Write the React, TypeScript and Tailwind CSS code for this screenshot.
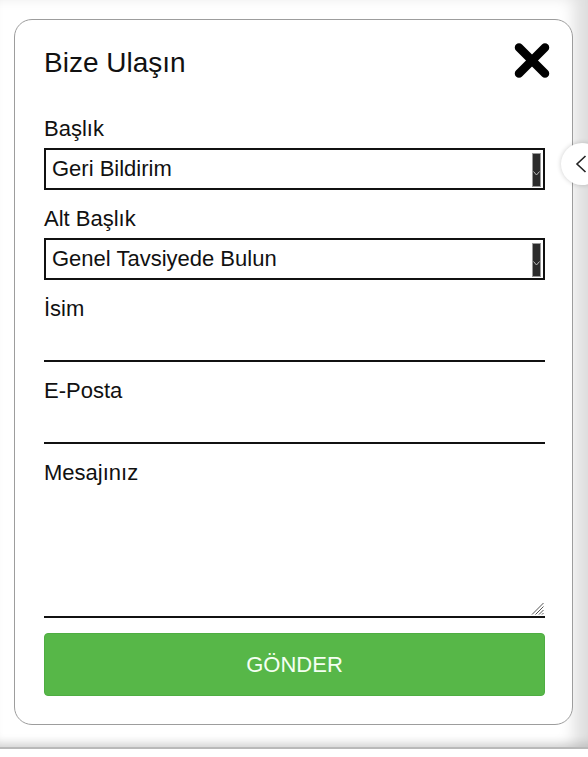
import { useState } from 'react';

const font = { fontFamily: '"Liberation Sans", Arial, sans-serif' };

function SelectBox({ value, options }: { value: string; options: string[] }) {
  const [v, setV] = useState(value);
  return (
    <div className="relative mt-[6px] h-[42px] border-2 border-[#111] bg-white">
      <select
        value={v}
        onChange={e => setV(e.target.value)}
        className="h-full w-full appearance-none bg-transparent pl-[6px] pr-[20px] text-[22px] leading-[26px] text-[#111] outline-none"
      >
        {options.map(o => (
          <option key={o}>{o}</option>
        ))}
      </select>
      {/* native-looking scroll arrow */}
      <div className="pointer-events-none absolute right-[2px] top-[3px] flex h-[34px] w-[9px] flex-col items-center justify-center border border-[#9a9a9a] bg-[#2c2c2c]">
        <svg width="7" height="5" viewBox="0 0 7 5" className="mt-[6px]">
          <path d="M0.5 0.5 L3.5 4 L6.5 0.5" fill="none" stroke="#bbb" strokeWidth="1" />
        </svg>
      </div>
    </div>
  );
}

export default function App() {
  return (
    <div className="h-[757px] w-[588px] overflow-hidden bg-white" style={font}>
      <div className="relative h-[749px] border-b-2 border-[#b9b9b9] bg-white shadow-[inset_0_-10px_10px_-6px_rgba(0,0,0,0.14),inset_-18px_0_16px_-4px_rgba(0,0,0,0.13)] pt-[19px]">
        {/* Card */}
        <div className="ml-[14px] w-[559px] rounded-[18px] border border-[#9d9d9d] bg-white pb-[28px] pl-[29px] pr-[27px] pt-[27px]">
          <div className="flex h-8 items-start justify-between">
            <h2 className="text-[28px] leading-[32px] text-[#111]">Bize Ulaşın</h2>
            <button className="-mr-[6px] -mt-[5px]" aria-label="Kapat">
              <svg width="38" height="37" viewBox="0 0 38 37">
                <path d="M6 5.5 L32 31.5 M32 5.5 L6 31.5" stroke="#000" strokeWidth="8.5" strokeLinecap="round" />
              </svg>
            </button>
          </div>

          <label className="mt-[37px] block text-[22px] leading-[26px] text-[#111]">Başlık</label>
          <SelectBox value="Geri Bildirim" options={['Geri Bildirim', 'Şikayet', 'Öneri']} />

          <label className="mt-4 block text-[22px] leading-[26px] text-[#111]">Alt Başlık</label>
          <SelectBox value="Genel Tavsiyede Bulun" options={['Genel Tavsiyede Bulun', 'Hata Bildir']} />

          <label className="mt-4 block text-[22px] leading-[26px] text-[#111]">İsim</label>
          <input className="block h-[40px] w-full border-b-2 border-[#111] text-[20px] outline-none" />

          <label className="mt-4 block text-[22px] leading-[26px] text-[#111]">E-Posta</label>
          <input className="block h-[40px] w-full border-b-2 border-[#111] text-[20px] outline-none" />

          <label className="mt-4 block text-[22px] leading-[26px] text-[#111]">Mesajınız</label>
          <div className="relative">
            <textarea className="block h-[132px] w-full resize-none border-b-2 border-[#111] text-[20px] outline-none" />
            <svg
              width="13"
              height="13"
              viewBox="0 0 13 13"
              className="pointer-events-none absolute bottom-[3px] right-[1px]"
            >
              <path d="M12.5 1 L1 12.5 M12.5 4.5 L4.5 12.5 M12.5 8 L8 12.5 M12.5 11 L11 12.5" stroke="#555" strokeWidth="1" />
            </svg>
          </div>

          <button className="mt-[15px] flex h-[63px] w-full items-center justify-center rounded-[4px] border border-[#4fad42] bg-[#57b748] text-[22px] text-[#f4fff2]">
            GÖNDER
          </button>
        </div>

        {/* side toggle tab */}
        <button
          className="absolute left-[561px] top-[143px] flex h-[42px] w-[42px] items-center justify-center rounded-full bg-white shadow-[0_0_5px_rgba(0,0,0,0.2)]"
          aria-label="Aç"
        >
          <svg width="12" height="18" viewBox="0 0 12 18" className="-ml-[3px]">
            <path d="M10.5 1 L2 9 L10.5 17" fill="none" stroke="#222" strokeWidth="1.6" />
          </svg>
        </button>
      </div>
    </div>
  );
}
